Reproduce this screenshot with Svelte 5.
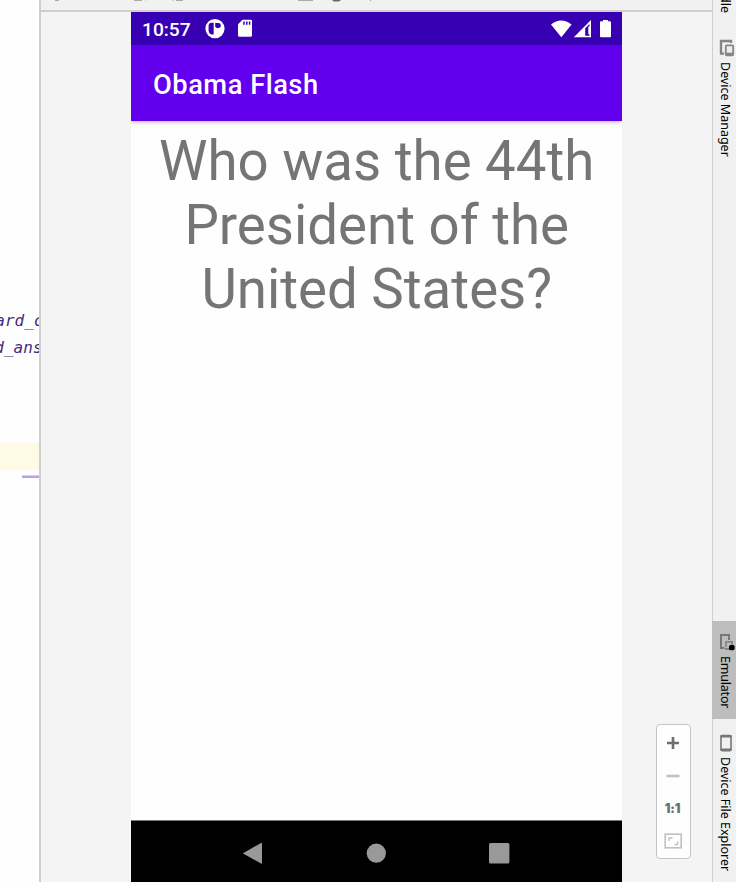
<script>
  const codeLines = ['ard_c', 'd_ans'];
</script>

<div class="window">
  <section class="editor">
    <div class="code">
      {#each codeLines as line}<div class="line">{line}</div>{/each}
    </div>
    <div class="caret-row"></div>
    <div class="marker"></div>
  </section>

  <section class="panel">
    <div class="toolbar">
      <svg width="671" height="2" viewBox="0 0 671 2">
        <path d="M14 0h4M93 0h8M135 0h7M257 0h15" stroke="#aaa" stroke-width="2" />
        <path d="M104 0h1M131 0h2" stroke="#b9d9f2" stroke-width="2" />
        <path d="M329 0h1" stroke="#999" stroke-width="2" />
        <path d="M291 0h9l-2 1.5h-5z" fill="#666" />
      </svg>
    </div>
    <div class="stage">
      <div class="phone">
        <div class="status">
          <span class="time">10:57</span>
          <svg class="notes" width="48" height="20" viewBox="0 0 48 20">
            <circle cx="10" cy="9.6" r="9.6" fill="#fff" />
            <path d="M3.6 6Q4.2 3.8 6.3 3.8H8.7V15.6H6.3Q3.8 14.5 3.6 12Z" fill="#3700b3" />
            <path d="M10.2 4.1H14.2L15.7 5.6V7.5L14.2 9H11.7L10.2 7.5Z" fill="#3700b3" />
            <path d="M37.5 .7H45.7Q47 .7 47 2V16.2Q47 17.7 45.5 17.7H34.5Q33 17.7 33 16.2V5.3Z" fill="#fff" />
            <path d="M39 2.4V5.7M41.8 2.4V5.7M44.6 2.4V5.7" stroke="#3700b3" stroke-width="1.5" />
          </svg>
          <svg class="signals" width="60" height="20" viewBox="0 0 60 20">
            <path d="M0 4.6Q10-3.8 20.6 4.6L10.3 17.2Z" fill="#fff" />
            <path d="M40 0V17.2H22.8Z" fill="#fff" />
            <path d="M34.2 8.2L38.5 3.9V6.4H37.3V14.2H38.5V15.8H34.2Z" fill="#3700b3" />
            <path d="M52 0H57V1.3H59Q60 1.3 60 2.3V16.2Q60 17.2 59 17.2H50Q49 17.2 49 16.2V2.3Q49 1.3 50 1.3H52Z" fill="#fff" />
          </svg>
        </div>
        <header>Obama Flash</header>
        <main>Who was the 44th<br />President of the<br />United States?</main>
        <nav>
          <svg width="491" height="61" viewBox="0 0 491 61">
            <path d="M112.5 32L130 22Q131 21.5 131 22.5V42Q131 43 130 42.4L112.5 32.8Q111.7 32.4 112.5 32Z" fill="#999" />
            <circle cx="245.3" cy="32.2" r="9.6" fill="#999" />
            <rect x="358" y="22" width="20.4" height="20.4" rx="1.5" fill="#999" />
          </svg>
        </nav>
      </div>

      <div class="zoom">
        <svg width="33" height="133" viewBox="0 0 33 133">
          <path d="M16 12V24M10 18H22" stroke="#6e6e6e" stroke-width="2.6" />
          <path d="M9.5 51H22.5" stroke="#c0c0c0" stroke-width="2.6" />
          <rect x="8.2" y="109.2" width="16" height="13.6" fill="none" stroke="#c0c0c0" stroke-width="1.6" />
          <path d="M12 116V113H15.5M17.5 119.5H20.7V116.2" fill="none" stroke="#c0c0c0" stroke-width="1.3" />
        </svg>
        <span>1:1</span>
      </div>
    </div>
  </section>

  <aside>
    <div class="tab gradle"><span>Gradle</span></div>
    <div class="tab manager">
      <svg width="16" height="18" viewBox="0 0 16 18">
        <path d="M12 4V2H2V14.6H5" fill="none" stroke="#858585" stroke-width="2.4" />
        <rect x="6.8" y="6.3" width="7.4" height="10" rx="1" fill="#eee" stroke="#858585" stroke-width="1.8" />
        <path d="M7 15H14" stroke="#858585" stroke-width="2.6" />
      </svg>
      <span>Device Manager</span>
    </div>
    <div class="tab emulator">
      <svg width="16" height="18" viewBox="0 0 16 18">
        <path d="M10 7V2H2V15H5.5" fill="none" stroke="#777" stroke-width="2" />
        <path d="M7 14V8.8H13V12M6 16H11" fill="none" stroke="#858585" stroke-width="1.8" />
        <rect x="10" y="12" width="5.6" height="5.2" rx="1.6" fill="#000" />
      </svg>
      <span>Emulator</span>
    </div>
    <div class="tab files">
      <svg width="16" height="18" viewBox="0 0 16 18">
        <rect x="2" y="1.6" width="10" height="15" rx="1" fill="#f1f1f1" stroke="#777" stroke-width="1.6" />
        <path d="M1.5 2.2H12.5M1.5 15.8H12.5" stroke="#777" stroke-width="2.6" />
      </svg>
      <span>Device File Explorer</span>
    </div>
  </aside>
</div>

<style>
  .window { display: flex; width: 736px; height: 882px; overflow: hidden; background: #f4f4f4; }
  .editor { width: 39px; height: 882px; overflow: hidden; background: #fefefe; border-right: 2px solid #cfcfcf; flex: none; }
  .code { height: 443px; padding-top: 307px; box-sizing: border-box; display: flex; flex-direction: column; align-items: flex-end; }
  .line { height: 27px; font: italic 16px/27px "DejaVu Sans Mono", monospace; color: #482a7b; white-space: pre; margin-right: -4.5px; }
  .line + .line { margin-right: -3.5px; }
  .caret-row { height: 27px; background: #fffae3; }
  .marker { height: 3px; width: 17px; margin: 5px 0 0 22px; background: linear-gradient(#d9cdf7 1px, #b7a0ee 1px); }
  .panel { width: 671px; flex: none; display: flex; flex-direction: column; }
  .toolbar { height: 10px; background: #f1f1f1; border-bottom: 2px solid #cfcfcf; }
  .toolbar svg { display: block; }
  .stage { flex: 1; display: flex; padding-left: 90px; }
  .phone { width: 491px; height: 870px; display: flex; flex-direction: column; font-family: Roboto, sans-serif; }
  .status { height: 33px; background: #3700b3; display: flex; align-items: flex-start; box-sizing: border-box; padding: 8px 11px 0; }
  .time { font-weight: 500; font-size: 19.2px; line-height: 19px; color: #fff; width: 63px; }
  .notes { margin-top: -1px; }
  .signals { margin-left: auto; }
  header { height: 76px; line-height: 81px; padding-left: 22px; background: #6200ee; color: #fff; font-size: 27.3px; font-weight: 500; letter-spacing: .5px; box-shadow: 0 1px 4px rgba(0,0,0,.3); position: relative; clip-path: inset(0 0 -6px 0); box-sizing: border-box; }
  main { flex: 1; background: #fefefe; color: #757575; font-size: 54.6px; line-height: 64.4px; text-align: center; padding: 7.5px 0 0 .5px; }
  nav { height: 62px; background: #000; border-top: 1px solid #777; box-sizing: border-box; }
  nav svg { display: block; }
  .zoom { position: relative; width: 33px; height: 133px; margin: 712px 0 0 34px; border: 1px solid #c4c4c4; border-radius: 4px; background: #fefefe; }
  .zoom svg { display: block; }
  .zoom span { position: absolute; left: 0; top: 76px; width: 31px; text-align: center; font: 900 12.5px/16px Inter, sans-serif; letter-spacing: -.2px; color: #6e6e6e; }
  aside { width: 24px; box-sizing: border-box; flex: none; border-left: 1px solid #cfcfcf; background: #f1f1f1; display: flex; flex-direction: column; }
  .tab { display: flex; flex-direction: column; align-items: flex-start; padding-left: 6px; box-sizing: border-box; flex: none; }
  .tab svg { display: block; flex: none; }
  .tab span { writing-mode: vertical-rl; font: 12.5px/14px "Noto Sans", sans-serif; color: #000; white-space: nowrap; margin-left: -1.5px; }
  .gradle { height: 39px; overflow: hidden; }
  .gradle span { margin-top: -26px; }
  .manager { height: 582px; }
  .manager span { margin-top: 5px; }
  .emulator { height: 98px; padding: 12px 0 0 7px; margin-left: -1px; background: #bdbdbd; }
  .emulator span { margin-top: 5px; letter-spacing: -.2px; }
  .files { padding-top: 15px; }
  .files span { margin-top: 5px; }
</style>
